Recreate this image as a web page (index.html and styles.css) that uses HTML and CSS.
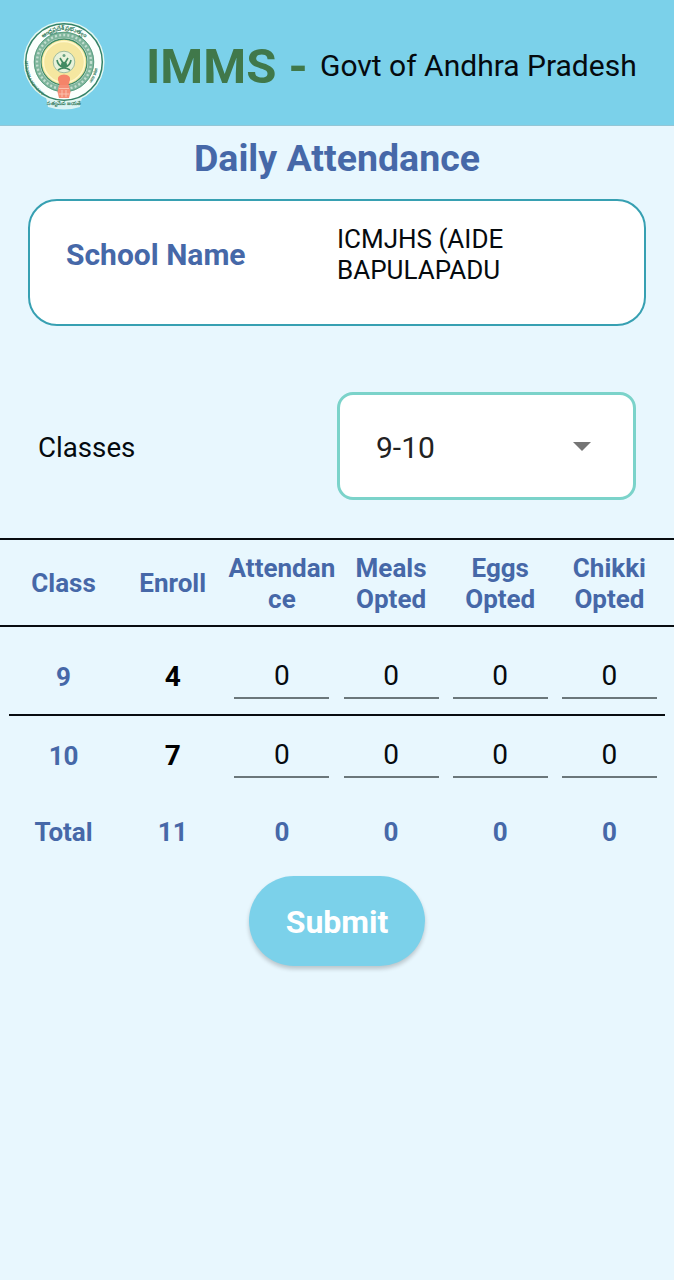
FILE: index.html
```html
<!DOCTYPE html>
<html lang="en">

<head>
    <meta charset="UTF-8">
    <meta name="viewport" content="width=device-width, initial-scale=1.0">
    <title>IMMS - Daily Attendance</title>
    <link rel="stylesheet" href="styles.css">
</head>

<body>
    <header class="app-bar">
        <svg class="emblem" viewBox="0 0 90 90" aria-label="Andhra Pradesh emblem">
            <defs>
                <path id="arc-top" d="M13 41 A32 32 0 0 1 77 41" />
                <path id="arc-left" d="M29 74 A36 36 0 0 1 9.5 36" />
                <path id="arc-right" d="M64 70 A35 35 0 0 0 79 36" />
            </defs>
            <path d="M27 76 H63 L61 86 Q45 91 29 86 Z" fill="#d9f3f4" />
            <circle cx="45" cy="41" r="40.5" fill="#e4f8f3" />
            <circle cx="45" cy="41" r="38.3" fill="#fbfffc" stroke="#348267" stroke-width="1.5" />
            <circle cx="45" cy="41" r="27" fill="none" stroke="#80b69d" stroke-width="6" />
            <circle cx="45" cy="41" r="27" fill="none" stroke="#c3ded0" stroke-width="2.4" stroke-dasharray="2 2.2" />
            <circle cx="45" cy="41" r="29.8" fill="none" stroke="#4b9576" stroke-width="0.8" />
            <circle cx="45" cy="41" r="23" fill="#f4e8a2" stroke="#3f8b67" stroke-width="1.3" />
            <circle cx="45" cy="41" r="20.5" fill="#f5e7a0" stroke="#fff8cb" stroke-width="1.4" />
            <circle cx="45" cy="41" r="10.8" fill="#e8f2da" stroke="#8baf93" stroke-width="0.8" />
            <g fill="none" stroke="#438b62" stroke-width="1.6">
                <path d="M38 39 Q39 45 44 46 M52 39 Q51 45 46 46 M41 37 L44 42 M49 37 L46 42" />
                <path d="M39 49 Q45 45 51 49" />
            </g>
            <circle cx="45" cy="34.5" r="1.5" fill="#6ba384" />
            <ellipse cx="45" cy="44" rx="3" ry="3.2" fill="#438b62" />
            <path d="M39 59 Q38 54 45 53.5 Q52 54 51 59 L49.5 64 H40.5 Z" fill="#f58469" />
            <path d="M40 64 H50 L51.5 71 L50 77 H40 L38.5 71 Z" fill="#f58e76" />
            <path d="M40 67.5 H50 M39.5 73 H50.5 M43 69 V76 M47 69 V76" stroke="#fcc7b4" stroke-width="0.9" />
            <text class="seal-telugu"><textPath href="#arc-top" startOffset="50%" text-anchor="middle">ఆంధ్రప్రదేశ్ ప్రభుత్వం</textPath></text>
            <text class="seal-english"><textPath href="#arc-left" startOffset="50%" text-anchor="middle">ANDHRA PRADESH</textPath></text>
            <text class="seal-english"><textPath href="#arc-right" startOffset="50%" text-anchor="middle">आंध्र प्रदेश</textPath></text>
            <text class="seal-motto" x="45" y="84" text-anchor="middle">సత్యమేవ జయతే</text>
        </svg>
        <span class="app-name">IMMS -</span>
        <span class="app-owner">Govt of Andhra Pradesh</span>
    </header>

    <h1>Daily Attendance</h1>

    <section class="school-card">
        <span class="school-label">School Name</span>
        <span class="school-value">ICMJHS (AIDE<br>BAPULAPADU</span>
    </section>

    <div class="class-picker">
        <label for="classes">Classes</label>
        <div class="select-box">
            <select id="classes">
                <option>9-10</option>
            </select>
            <svg class="arrow" viewBox="0 0 18 9"><path d="M0 0 H18 L9 9 Z" /></svg>
        </div>
    </div>

    <div class="attendance">
        <div class="row row-head">
            <span>Class</span>
            <span>Enroll</span>
            <span>Attendan<br>ce</span>
            <span>Meals<br>Opted</span>
            <span>Eggs<br>Opted</span>
            <span>Chikki<br>Opted</span>
        </div>
        <div class="row row-entry">
            <span>9</span>
            <span class="enroll">4</span>
            <input type="text" value="0">
            <input type="text" value="0">
            <input type="text" value="0">
            <input type="text" value="0">
        </div>
        <div class="divider"></div>
        <div class="row row-entry row-last">
            <span>10</span>
            <span class="enroll">7</span>
            <input type="text" value="0">
            <input type="text" value="0">
            <input type="text" value="0">
            <input type="text" value="0">
        </div>
        <div class="row row-total">
            <span>Total</span>
            <span>11</span>
            <span>0</span>
            <span>0</span>
            <span>0</span>
            <span>0</span>
        </div>
    </div>

    <button class="submit">Submit</button>
</body>

</html>
```
FILE: styles.css
```css
* {
    box-sizing: border-box;
}

body {
    font-family: Roboto, sans-serif;
    margin: 0;
    min-height: 100vh;
    background-color: #e8f7fe;
    color: #050a0e;
}

.app-bar {
    display: flex;
    align-items: center;
    height: 126px;
    padding: 0 20px 0 19px;
    background-color: #7bd1ea;
    border-bottom: 1px solid #93c6d6;
    white-space: nowrap;
}

.emblem {
    width: 90px;
    height: 90px;
    margin-top: 6px;
    flex: none;
}

.seal-telugu {
    font-family: "Noto Sans", sans-serif;
    font-size: 6px;
    font-weight: bold;
    fill: #397f63;
}

.seal-english {
    font-family: "Noto Sans", sans-serif;
    font-size: 4px;
    font-weight: bold;
    fill: #397f63;
}

.seal-motto {
    font-family: "Noto Sans", sans-serif;
    font-size: 5px;
    font-weight: bold;
    fill: #397f63;
}

.app-name {
    margin-left: 37px;
    width: 174px;
    margin-top: 7px;
    font-size: 49px;
    font-weight: bold;
    color: #40784a;
}

.app-owner {
    margin-top: 5px;
    font-size: 30px;
}

h1 {
    margin: 9px 0 0;
    height: 46px;
    line-height: 46px;
    font-size: 37.5px;
    font-weight: bold;
    text-align: center;
    color: #4668a8;
}

.school-card {
    display: flex;
    height: 127px;
    margin: 18px 28px 0;
    padding: 23px 36px;
    background-color: #fff;
    border: 2px solid #37a0b2;
    border-radius: 29px;
}

.school-label {
    width: 271px;
    padding-top: 13px;
    font-size: 30px;
    font-weight: bold;
    color: #4668a8;
}

.school-value {
    font-size: 26px;
    line-height: 31px;
}

.class-picker {
    display: flex;
    align-items: center;
    justify-content: space-between;
    margin-top: 66px;
    padding: 0 38px;
    font-size: 27.7px;
}

.class-picker label {
    padding-top: 2px;
}

.select-box {
    display: flex;
    align-items: center;
    width: 299px;
    height: 108px;
    padding: 0 42px 0 36px;
    background-color: #fff;
    border: 3px solid #7bd3ca;
    border-radius: 16px;
}

.select-box select {
    flex: 1;
    padding: 2px 0 0;
    border: none;
    background: none;
    appearance: none;
    font: 30px Roboto, sans-serif;
    color: #222;
}

.arrow {
    width: 18px;
    height: 9px;
    fill: #757575;
}

.attendance {
    margin-top: 38px;
    font-size: 26px;
    font-weight: bold;
    color: #4668a8;
}

.row {
    display: grid;
    grid-template-columns: repeat(6, 1fr);
    align-items: center;
    padding: 0 10px 0 9px;
    text-align: center;
}

.row-head {
    height: 89px;
    padding-top: 2px;
    line-height: 31px;
    border-top: 2px solid #080c10;
    border-bottom: 2px solid #080c10;
}

.row-entry {
    height: 87px;
    padding-top: 12px;
}

.row-entry input {
    width: 95px;
    height: 45px;
    margin: 0 auto;
    padding: 0 0 1px;
    border: none;
    border-bottom: 2px solid #6b777b;
    background: none;
    font: 28px Roboto, sans-serif;
    text-align: center;
    color: #050a0e;
}

.row-last {
    height: 72px;
    padding-top: 7px;
}

.row-last input {
    padding-bottom: 0;
}

.enroll {
    font-size: 28px;
    color: #000;
}

.divider {
    height: 2px;
    margin: 0 9px;
    background-color: #080c10;
}

.row-total {
    height: 88px;
}

.submit {
    display: block;
    width: 176px;
    height: 90px;
    margin: 0 auto;
    padding-top: 3px;
    border: none;
    border-radius: 45px;
    background-color: #7bd1ea;
    box-shadow: 0 3px 4px rgba(0, 0, 0, 0.2);
    font: bold 32px Roboto, sans-serif;
    color: #fff;
}
```
